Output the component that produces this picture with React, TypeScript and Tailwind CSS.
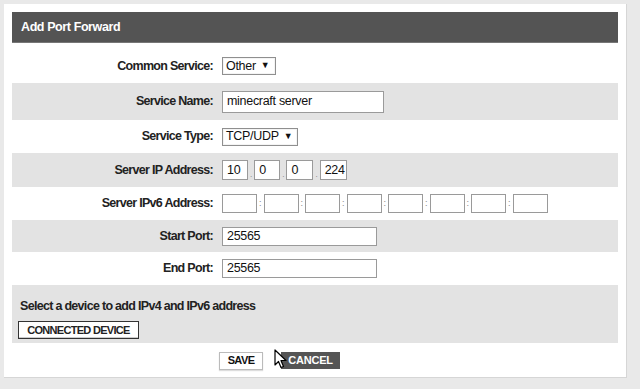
import React from "react";

const font = { fontFamily: '"Liberation Sans", Arial, sans-serif' };

function Label({ children }: { children: React.ReactNode }) {
  return (
    <div className="w-[201px] shrink-0 text-right text-[12.5px] font-bold tracking-[-0.7px] text-[#222]">
      {children}
    </div>
  );
}

function Row({
  gray,
  h,
  label,
  children,
}: {
  gray?: boolean;
  h: string;
  label: string;
  children: React.ReactNode;
}) {
  return (
    <div className={`flex items-center ${h} ${gray ? "bg-[#e3e3e3]" : "bg-white"}`}>
      <Label>{label}</Label>
      <div className="ml-[9px] flex items-center">{children}</div>
    </div>
  );
}

function Select({ value, w }: { value: string; w: string }) {
  return (
    <div
      className={`flex h-[18px] ${w} items-center border border-[#8f8f8f] bg-white pl-[3px] text-[12.5px] tracking-[-0.3px] text-[#111] shadow-[inset_0_0_0_1px_#f4f4f4]`}
    >
      <span>{value}</span>
      <span className="ml-[5px] text-[9px]">▼</span>
    </div>
  );
}

function Box({ w, h = "h-[19px]", value }: { w: string; h?: string; value?: string }) {
  return (
    <div
      className={`flex ${w} ${h} items-center border border-[#9a9a9a] bg-white pl-[4px] text-[12.5px] tracking-[-0.3px] text-[#111]`}
    >
      {value}
    </div>
  );
}

function Cursor() {
  return (
    <svg width="14" height="20" viewBox="0 0 14 20" className="absolute left-[274px] top-[349px]">
      <path
        d="M1 1 L1 16 L4.5 12.5 L7 18.5 L9.5 17.5 L7 11.5 L12 11.5 Z"
        fill="white"
        stroke="black"
        strokeWidth="1.2"
        strokeLinejoin="round"
      />
    </svg>
  );
}

export default function App() {
  return (
    <div className="relative h-[389px] w-[640px] overflow-hidden bg-[#e9e9e9]" style={font}>
      <div className="ml-[4px] mt-[4px] h-[374px] w-[623px] border-r border-b border-[#d6d6d6] bg-white px-[8px] pt-[8px]">
        <div className="flex h-[31px] items-center bg-[#545454] pl-[9px] text-[12.5px] font-bold tracking-[-0.4px] text-white shadow-[inset_0_-1px_0_#777]">
          Add Port Forward
        </div>
        <div className="flex flex-col">
          <Row h="h-[40px] pt-[6px]" label="Common Service:">
            <Select value="Other" w="w-[54px]" />
          </Row>
          <Row gray h="h-[37px]" label="Service Name:">
            <Box w="w-[162px]" h="h-[22px]" value="minecraft server" />
          </Row>
          <Row h="h-[33px]" label="Service Type:">
            <Select value="TCP/UDP" w="w-[76px]" />
          </Row>
          <Row gray h="h-[34px]" label="Server IP Address:">
            <Box w="w-[26px]" h="h-[20px]" value="10" />
            <span className="mx-[2px] mt-[10px] text-[8px] leading-none text-[#777]">.</span>
            <Box w="w-[26px]" h="h-[20px]" value="0" />
            <span className="mx-[2px] mt-[10px] text-[8px] leading-none text-[#777]">.</span>
            <Box w="w-[27px]" h="h-[20px]" value="0" />
            <span className="mx-[2px] mt-[10px] text-[8px] leading-none text-[#777]">.</span>
            <Box w="w-[27px]" h="h-[20px]" value="224" />
          </Row>
          <Row h="h-[33px]" label="Server IPv6 Address:">
            {[0, 1, 2, 3, 4, 5, 6, 7].map((i) => (
              <React.Fragment key={i}>
                {i > 0 && (
                  <span className="mx-[2px] text-[9px] leading-none text-[#888]">:</span>
                )}
                <Box w="w-[35px]" h="h-[19px]" />
              </React.Fragment>
            ))}
          </Row>
          <Row gray h="h-[32px]" label="Start Port:">
            <Box w="w-[155px]" value="25565" />
          </Row>
          <Row h="h-[33px]" label="End Port:">
            <Box w="w-[155px]" value="25565" />
          </Row>
          <div className="flex h-[58px] flex-col bg-[#e3e3e3] pl-[8px] pt-[12px]">
            <div className="text-[12.5px] font-bold tracking-[-0.7px] text-[#222]">
              Select a device to add IPv4 and IPv6 address
            </div>
            <div className="mt-[5px] flex h-[18px] w-[121px] -ml-[2px] items-center justify-center border border-[#333] bg-white text-[11px] font-bold tracking-[-0.7px] text-[#222] shadow-[inset_0_-1px_0_#ccc]">
              CONNECTED DEVICE
            </div>
          </div>
          <div className="flex h-[35px] items-center pl-[207px]">
            <div className="flex h-[18px] w-[44px] items-center justify-center border border-[#bbb] bg-white text-[11px] font-bold tracking-[-0.6px] text-[#111] shadow-[0_1px_1px_#ddd]">
              SAVE
            </div>
            <div className="ml-[18px] flex h-[17px] w-[59px] items-center justify-center bg-[#555] text-[11px] font-bold tracking-[-0.2px] text-white">
              CANCEL
            </div>
          </div>
        </div>
      </div>
      <Cursor />
    </div>
  );
}
